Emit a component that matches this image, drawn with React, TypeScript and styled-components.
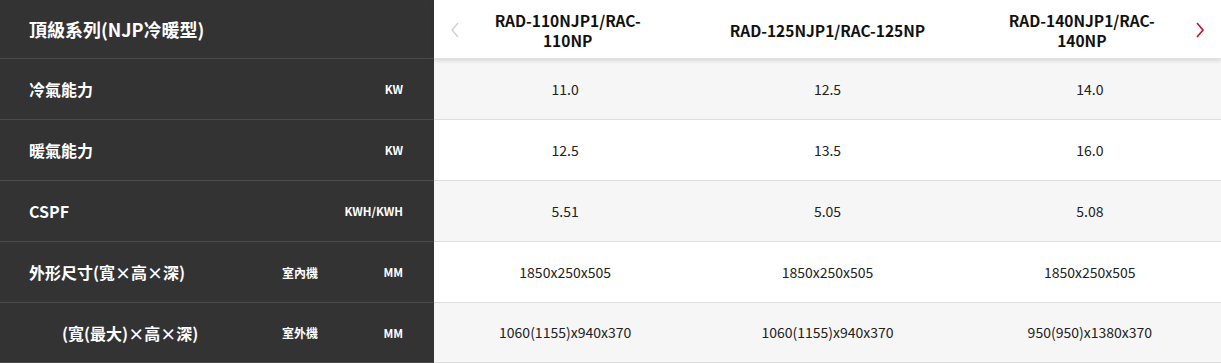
import React from 'react';
import styled, { createGlobalStyle } from 'styled-components';

const GlobalStyle = createGlobalStyle`
    html, body {
        margin: 0;
        padding: 0;
        background: #ffffff;
    }
    body {
        font-family: "Noto Sans CJK TC", "Noto Sans", sans-serif;
    }
`;

const models = ['RAD-110NJP1/RAC-110NP', 'RAD-125NJP1/RAC-125NP', 'RAD-140NJP1/RAC-140NP'];

// padding per header cell, arrows sit on the outer sides
const headerPad = ['2px 42px 0 47px', '2px 20px 0', '2px 54px 0 38px'];

const specs = [
    { label: '冷氣能力', unit: 'KW', values: ['11.0', '12.5', '14.0'] },
    { label: '暖氣能力', unit: 'KW', values: ['12.5', '13.5', '16.0'] },
    { label: 'CSPF', unit: 'KWH/KWH', values: ['5.51', '5.05', '5.08'] },
    { label: '外形尺寸(寬×高×深)', sub: '室內機', unit: 'MM', values: ['1850x250x505', '1850x250x505', '1850x250x505'] },
    { label: '(寬(最大)×高×深)', sub: '室外機', unit: 'MM', indent: true, values: ['1060(1155)x940x370', '1060(1155)x940x370', '950(950)x1380x370'] },
];

export default function App() {
    return (
        <>
            <GlobalStyle />
            <Table>
                <HeaderRow>
                    <TitleCell>頂級系列(NJP冷暖型)</TitleCell>
                    <ModelArea>
                        <Arrow $active={false}>
                            <svg width="10" height="16" viewBox="0 0 10 16">
                                <path d="M8 1 L2 8 L8 15" fill="none" stroke="currentColor" strokeWidth="1.3" />
                            </svg>
                        </Arrow>
                        {models.map((m, i) => (
                            <ModelCell key={m} $pad={headerPad[i]}>{m}</ModelCell>
                        ))}
                        <Arrow $active>
                            <svg width="10" height="16" viewBox="0 0 10 16">
                                <path d="M2 1 L8 8 L2 15" fill="none" stroke="currentColor" strokeWidth="1.6" />
                            </svg>
                        </Arrow>
                    </ModelArea>
                </HeaderRow>
                {specs.map((s, i) => (
                    <Row key={s.label} $last={i === specs.length - 1}>
                        <LabelCell>
                            <Label $indent={!!s.indent}>{s.label}</Label>
                            <Sub>{s.sub}</Sub>
                            <Unit>{s.unit}</Unit>
                        </LabelCell>
                        <Values $even={i % 2 === 1}>
                            {s.values.map((v, j) => (
                                <Value key={j}>{v}</Value>
                            ))}
                        </Values>
                    </Row>
                ))}
            </Table>
        </>
    );
}

const Table = styled.div`
    width: 1221px;
    height: 363px;
    display: flex;
    flex-direction: column;
    overflow: hidden;
`;

const HeaderRow = styled.div`
    display: flex;
    height: 60px;
    position: relative;
    z-index: 2;
`;

const TitleCell = styled.div`
    width: 434px;
    flex-shrink: 0;
    box-sizing: border-box;
    background: #333333;
    border-bottom: 1px solid #4b4b4b;
    color: #ffffff;
    font-size: 18px;
    font-weight: 700;
    display: flex;
    align-items: center;
    padding: 0 0 1px 29px;
`;

const ModelArea = styled.div`
    flex: 1;
    min-width: 0;
    display: flex;
    align-items: center;
    background: #ffffff;
    position: relative;
    box-shadow: 0 2px 4px rgba(0, 0, 0, 0.12);
    border-bottom: 1px solid #e2e2e2;
    box-sizing: border-box;
`;

const Arrow = styled.div<{ $active: boolean }>`
    position: absolute;
    top: 22px;
    ${(p) => (p.$active ? 'right: 16px;' : 'left: 16px;')}
    color: ${(p) => (p.$active ? '#c8102e' : '#d0d0d0')};
    display: flex;
`;

const ModelCell = styled.div<{ $pad: string }>`
    width: 33.333%;
    flex-shrink: 0;
    box-sizing: border-box;
    text-align: center;
    font-size: 15.5px;
    font-weight: 700;
    line-height: 20px;
    color: #111111;
    padding: ${(p) => p.$pad};
    word-break: break-word;
`;

const Row = styled.div<{ $last: boolean }>`
    display: flex;
    height: ${(p) => (p.$last ? '60px' : '61px')};
    flex-shrink: 0;
`;

const LabelCell = styled.div`
    width: 434px;
    flex-shrink: 0;
    box-sizing: border-box;
    background: #333333;
    border-bottom: 1px solid #4b4b4b;
    color: #ffffff;
    display: grid;
    grid-template-columns: 253px 60px 1fr;
    align-items: center;
    padding: 0 31px 0 29px;
`;

const Label = styled.div<{ $indent: boolean }>`
    font-size: 16px;
    font-weight: 700;
    padding-left: ${(p) => (p.$indent ? '33px' : '0')};
    white-space: nowrap;
`;

const Sub = styled.div`
    font-size: 12px;
    font-weight: 700;
`;

const Unit = styled.div`
    font-size: 11.5px;
    font-weight: 700;
    text-align: right;
    white-space: nowrap;
`;

const Values = styled.div<{ $even: boolean }>`
    flex: 1;
    display: flex;
    background: ${(p) => (p.$even ? '#ffffff' : '#f6f6f6')};
    border-bottom: 1px solid #dddddd;
    box-sizing: border-box;
`;

const Value = styled.div`
    flex: 1 1 0;
    min-width: 0;
    display: flex;
    align-items: center;
    justify-content: center;
    font-size: 14px;
    color: #222222;
    padding-bottom: 1px;
`;
